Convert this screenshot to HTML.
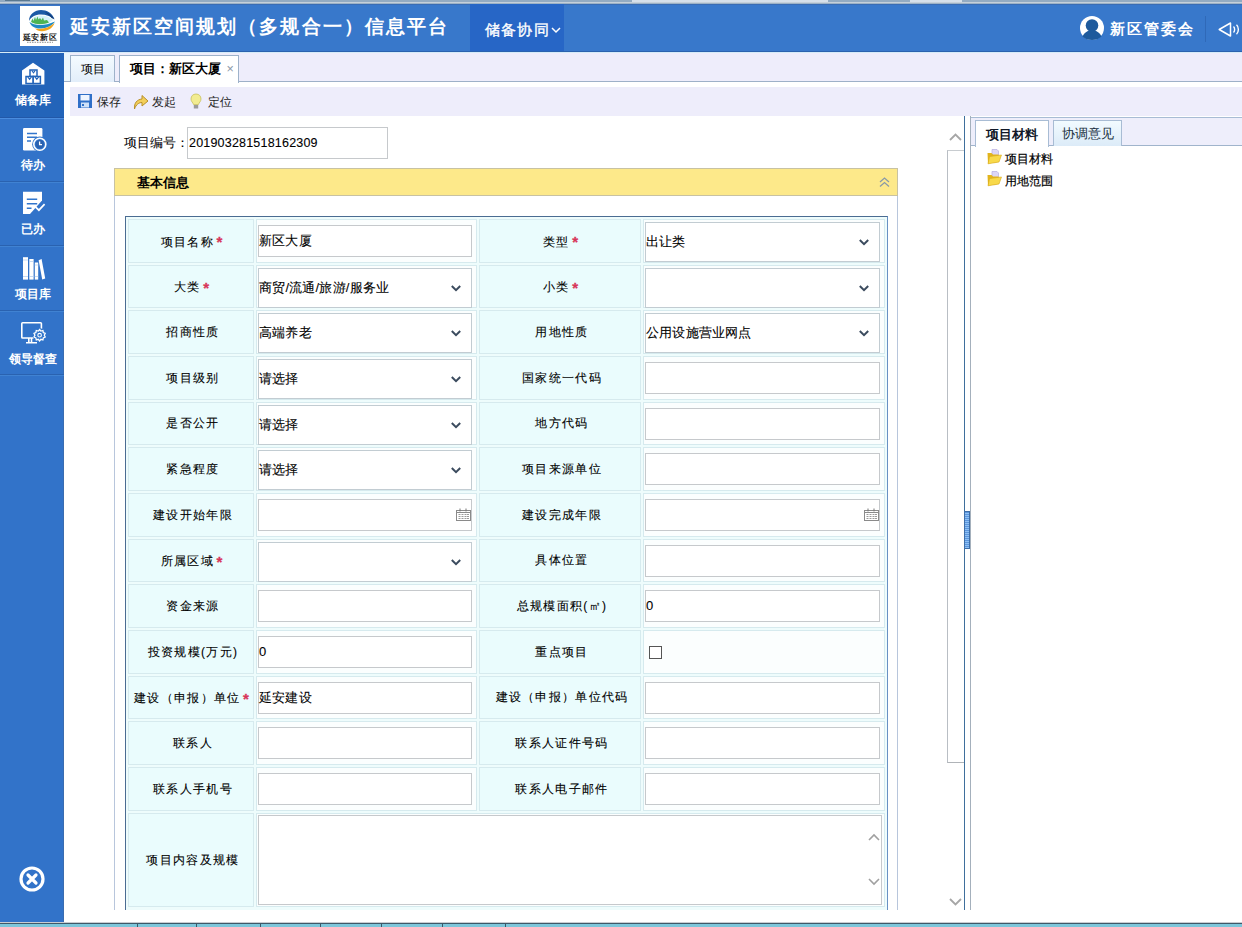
<!DOCTYPE html>
<html><head><meta charset="utf-8">
<style>
*{box-sizing:border-box}
html,body{margin:0;padding:0;width:1242px;height:927px;overflow:hidden;background:#fff;font-family:"Liberation Sans",sans-serif;font-size:12px;color:#000}
.a{position:absolute}
#top{left:0;top:0;width:1242px;height:4px;background:#9cb2c6}
#hdr{left:0;top:4px;width:1242px;height:48px;background:#3878cb;border-bottom:1px solid #2b62ae}
#logo{left:20px;top:6px;width:40px;height:40px;background:#fff}
#title{left:70px;top:15px;color:#fff;font-size:19px;letter-spacing:2.05px;font-weight:bold;line-height:24px;white-space:nowrap}
#nav{left:470px;top:4px;width:94px;height:47px;background:#2766c6}
#navt{left:485px;top:19.5px;color:#fff;font-size:15px;letter-spacing:1.2px;line-height:20px;-webkit-text-stroke:0.35px #fff;white-space:nowrap}
#user{left:1110px;top:19px;color:#fff;font-size:15px;letter-spacing:2.1px;font-weight:bold;line-height:20px;white-space:nowrap}
#sep{left:1205px;top:16px;width:1px;height:26px;background:#2f69b8}
#side{left:0;top:53px;width:64px;height:869px;background:#3273c9}
.st{position:absolute;left:0;width:64px;text-align:center;color:#fff;font-size:12px;line-height:15px;font-weight:bold;white-space:nowrap}
.si{position:absolute;left:0;width:64px;height:64px;border-bottom:1px solid #2a66b6;box-shadow:0 1px 0 #4a88d4}
.si .t{position:absolute;left:0;width:64px;text-align:center;color:#fff;font-size:12px;line-height:14px;top:40px;white-space:nowrap}
.si svg{position:absolute}
#content{left:64px;top:52px;width:1178px;height:870px;background:#fff}
#tabbar{left:64px;top:52px;width:1178px;height:30px;background:#eeedfb;border-top:1px solid #dcf0fb;border-bottom:1px solid #9eb0c8}
.tab{position:absolute;top:55px;height:27px;border:1px solid #9eb2ca;border-bottom:none;font-size:12px;line-height:27px;text-align:center;white-space:nowrap}
#toolbar{left:70px;top:87px;width:1172px;height:29px;background:#eeedfb}
.tb{position:absolute;top:95px;font-size:12px;line-height:14px;color:#222;white-space:nowrap}
.lc,.vc{position:absolute;border:1px solid #d6eaee}
.lc{background:#eafcfd;display:flex;align-items:center;justify-content:center;padding-left:4px;font-size:12px;letter-spacing:1.3px;color:#000;-webkit-text-stroke:0.1px #000;white-space:nowrap}
.vc{background:#fbfefe}
.req{color:#d8365a;-webkit-text-stroke:0.3px #d8365a;margin-left:2.5px;margin-right:3px;letter-spacing:0;font-size:15px;font-weight:bold;position:relative;top:1.5px}
.inp,.sel,.ta{position:absolute;background:#fff;border:1px solid #c6c9cc;font-size:13px;letter-spacing:0.2px;color:#000;-webkit-text-stroke:0.1px #000;white-space:nowrap}
.sel{border-color:#c2ccd2}
.inp .v,.sel .v{position:absolute;left:0;top:50%;transform:translateY(-50%);line-height:16px}
.chev{position:absolute;right:10px;top:50%;margin-top:-3px}
.cal{position:absolute;right:0;top:8px}
.chk{position:absolute;width:13px;height:13px;border:1px solid #555;background:#fff}
</style></head><body>
<div class="a" id="top"></div>
<div class="a" style="left:0;top:0;width:1242px;height:2px;background:#93abc2"></div>
<div class="a" style="left:5px;top:0;width:25px;height:1px;background:#5a7890"></div><div class="a" style="left:632px;top:0;width:196px;height:2px;background:#d6e0ea"></div>
<div class="a" style="left:910px;top:0;width:52px;height:2px;background:#d6e0ea"></div>
<div class="a" style="left:0;top:2px;width:1242px;height:1px;background:#c6d0da"></div>
<div class="a" id="hdr"></div>
<div class="a" style="left:0;top:4px;width:1242px;height:1px;background:#3a6cb4"></div>
<div class="a" id="nav"></div>
<div class="a" id="logo"></div>
<svg class="a" style="left:20px;top:6px" width="40" height="40" viewBox="0 0 40 40">
 <path d="M9 15 C9 8 15 4 21 4 C27 4 32 7 34.5 13 C30 10 26 8.5 21 8.5 C15 8.5 11 11 9 15 Z" fill="#1c5aa6"/>
 <path d="M25 6 C29 7 32.5 9.5 34.5 13.5 L31.5 12 C29.5 9.5 27 8 25 6 Z" fill="#123e7c"/>
 <path d="M10.5 15.5 C12 11.5 16 9.5 21 9.5 C26 9.5 30 11 33 14 L29 17 C24 18 16 18.5 10.5 15.5 Z" fill="#d6f2fa"/>
 <path d="M11 16 L12.5 12.5 L13.5 15 L15 11 L16 14 L17.5 10.5 L18.5 13.5 L20 12 L21.5 14 L23 11.5 L24 14.5 L27 14 L29 16.5 C24 18.5 16 19 11 16 Z" fill="#4cb454"/>
 <path d="M9.5 16 C14 19.5 24 20.5 35 15.5 C33 19 28 22 21 22.5 C15 22.8 11 20.5 9.5 16 Z" fill="#1f8ac4"/>
 <path d="M15 22.5 C21 24 29 22 34.5 17 C33 22 28 25 22 25.2 C19 25.3 16.5 24.2 15 22.5 Z" fill="#f2a41e"/>
 <text x="20" y="33.6" text-anchor="middle" font-size="7.6" font-weight="bold" fill="#1a1a1a" letter-spacing="0.6">延安新区</text>
 <path d="M7 36.3 H33" stroke="#666" stroke-width="0.7" stroke-dasharray="1.6 0.9"/>
</svg>
<div class="a" id="title">延安新区空间规划（多规合一）信息平台</div>
<div class="a" id="navt">储备协同<svg width="10" height="8" viewBox="0 0 10 8" style="margin-left:1px;vertical-align:1px"><path d="M1 2 L5 6 L9 2" fill="none" stroke="#fff" stroke-width="1.5"/></svg></div>
<div class="a" id="user">新区管委会</div>
<svg class="a" style="left:1079px;top:15px" width="26" height="26" viewBox="0 0 26 26">
 <circle cx="13" cy="13" r="12" fill="#fff"/>
 <circle cx="13" cy="10.5" r="6.3" fill="#1e5a9c"/>
 <path d="M3.5 21.5 C6 16.5 9 15.5 13 15.5 C17 15.5 20 16.5 22.5 21.5 C20 24 17 25 13 25 C9 25 6 24 3.5 21.5 Z" fill="#1e5a9c"/>
</svg>
<svg class="a" style="left:1218px;top:22px" width="24" height="15" viewBox="0 0 24 15">
 <path d="M1.2 7.5 L12.5 1 V14 Z" fill="none" stroke="#fff" stroke-width="1.5" stroke-linejoin="round"/>
 <path d="M15.5 4.5 C17 6 17 9 15.5 10.5" fill="none" stroke="#fff" stroke-width="1.4"/>
 <path d="M18.5 2.8 C21 5 21 10 18.5 12.2" fill="none" stroke="#fff" stroke-width="1.4"/>
</svg>
<div class="a" id="sep"></div>

<div class="a" id="side"></div>
<div class="a" style="left:63px;top:53px;width:1px;height:869px;background:#3a6cb0"></div>
<div class="a" style="left:0;top:53px;width:64px;height:64px;background:#2364b9"></div>
<div class="a" style="left:0;top:117px;width:64px;height:1px;background:#2258a8"></div>
<div class="a" style="left:0;top:118px;width:64px;height:1px;background:#4a8cde"></div>
<div class="a" style="left:0;top:181px;width:64px;height:1px;background:#2a62b0"></div>
<div class="a" style="left:0;top:182px;width:64px;height:1px;background:#4082d2"></div>
<div class="a" style="left:0;top:245px;width:64px;height:1px;background:#2a62b0"></div>
<div class="a" style="left:0;top:246px;width:64px;height:1px;background:#4082d2"></div>
<div class="a" style="left:0;top:310px;width:64px;height:1px;background:#2a62b0"></div>
<div class="a" style="left:0;top:311px;width:64px;height:1px;background:#4082d2"></div>
<div class="a" style="left:0;top:374px;width:64px;height:1px;background:#2a62b0"></div>
<div class="a" style="left:0;top:375px;width:64px;height:1px;background:#4082d2"></div>
<div class="st" style="top:93px;left:1px">储备库</div>
<div class="st" style="top:158px;left:1px">待办</div>
<div class="st" style="top:222px;left:1px">已办</div>
<div class="st" style="top:287px;left:1px">项目库</div>
<div class="st" style="top:351.5px;left:1px">领导督查</div>
<svg class="a" style="left:0;top:0" width="64" height="927" viewBox="0 0 64 927">
 <path d="M22 70.5 L33 62.8 L44.4 70.5 V84.5 H22 Z" fill="#fff"/>
 <rect x="30" y="70" width="7" height="6.5" fill="#fff" stroke="#2364b9" stroke-width="1.5"/>
 <rect x="26" y="76.5" width="7.2" height="7" fill="#fff" stroke="#2364b9" stroke-width="1.5"/>
 <rect x="33.2" y="76.5" width="7.2" height="7" fill="#fff" stroke="#2364b9" stroke-width="1.5"/>
 <path d="M31.8 70.5 L33.5 72.8 L35.2 70.5 M27.8 77 L29.6 79.3 L31.4 77 M35 77 L36.8 79.3 L38.6 77" fill="none" stroke="#2364b9" stroke-width="1.2"/>
 <rect x="23" y="128" width="19.4" height="22.4" rx="1.2" fill="#fff"/>
 <path d="M27 133.5 H37 M27 137.3 H37 M27 141 H31" stroke="#3276cc" stroke-width="1.6"/>
 <circle cx="39.8" cy="144.2" r="7.6" fill="#3276cc"/>
 <circle cx="39.8" cy="144.2" r="6" fill="none" stroke="#fff" stroke-width="1.6"/>
 <circle cx="39.8" cy="144.2" r="4.2" fill="#2a62b0"/>
 <path d="M39.6 141.5 V144.6 H42" fill="none" stroke="#fff" stroke-width="1.3"/>
 <path d="M23 191.7 H42 V200.5 L30 214 H23 Z" fill="#fff"/>
 <path d="M26.8 199.2 H37.2 M26.8 203.7 H37.2 M26.8 208.2 H31.5" stroke="#3276cc" stroke-width="1.5"/>
 <path d="M35.4 206.8 L38.9 210.2 L44.6 204.2" fill="none" stroke="#fff" stroke-width="1.7"/>
 <rect x="23" y="257.2" width="5" height="22.4" fill="#fff"/>
 <rect x="29.3" y="259" width="4.3" height="20.6" fill="#fff"/>
 <rect x="34.8" y="262.5" width="3.4" height="17.1" fill="#fff"/>
 <path d="M38.6 260.2 L41.6 259 L45.2 278.6 L42.2 279.6 Z" fill="#fff"/>
 <path d="M23 260 H28 M23 276.5 H28 M29.3 261.5 H33.6 M29.3 276.5 H33.6 M34.8 265 H38.2 M34.8 276.5 H38.2" stroke="#b8d0f0" stroke-width="0.8"/>
 <rect x="21.8" y="322.8" width="19.6" height="15.2" rx="0.8" fill="none" stroke="#fff" stroke-width="1.6"/>
 <path d="M31.5 338 V342 M28.8 338 V342 M26 342.8 H37" stroke="#fff" stroke-width="1.6"/>
 <circle cx="39.6" cy="335.2" r="7" fill="#3276cc"/>
 <path d="M39.6 329.5 l1.3 1.6 2 -0.6 0.4 2 1.9 0.9 -0.9 1.8 0.9 1.8 -1.9 0.9 -0.4 2 -2 -0.6 -1.3 1.6 -1.3 -1.6 -2 0.6 -0.4 -2 -1.9 -0.9 0.9 -1.8 -0.9 -1.8 1.9 -0.9 0.4 -2 2 0.6 Z" fill="none" stroke="#fff" stroke-width="1.3"/>
 <circle cx="39.6" cy="335.2" r="1.8" fill="none" stroke="#fff" stroke-width="1.1"/>
 <circle cx="32" cy="879" r="11" fill="none" stroke="#fff" stroke-width="3.2"/>
 <path d="M28 875 L36 883 M36 875 L28 883" stroke="#fff" stroke-width="3.2" stroke-linecap="round"/>
</svg>

<div class="a" id="tabbar"></div>
<div class="a" style="left:0;top:52px;width:1242px;height:1px;background:#d6ecf8"></div>
<div class="a" style="left:64px;top:53px;width:6px;height:28px;background:#eaf6fc"></div>
<div class="tab" style="left:70px;width:45px;background:linear-gradient(#f4fbff,#e2eefa)">项目</div>
<div class="tab" style="left:119px;width:120px;height:28px;background:#fff;font-weight:bold;text-align:left;padding-left:10px;font-size:12.6px">项目：新区大厦 <span style="font-weight:normal;color:#8a98a8;margin-left:2px">×</span></div>
<div class="a" id="toolbar"></div>
<div class="tb" style="left:97px">保存</div>
<svg class="a" style="left:77px;top:93px" width="16" height="16" viewBox="0 0 16 16">
 <rect x="1" y="1" width="14" height="14" fill="#2f6fc8"/>
 <rect x="3.5" y="2" width="9" height="5.5" fill="#eef4ff"/>
 <rect x="4" y="9.5" width="8" height="5" fill="#cfe0f8"/>
 <rect x="5" y="11" width="2" height="2" fill="#2f6fc8"/>
</svg>
<svg class="a" style="left:133px;top:93px" width="16" height="17" viewBox="0 0 16 17">
 <path d="M1.5 16 C1 10 4 6.5 9 6 V2.5 L15 8 L9 13 V9.5 C6 9.5 3 11.5 1.5 16 Z" fill="#f3cf5a" stroke="#b8902a" stroke-width="1"/>
</svg>
<svg class="a" style="left:190px;top:93px" width="12" height="17" viewBox="0 0 12 17">
 <path d="M6 1 C9 1 11 3 11 6 C11 8.5 9 9.5 8.5 11.5 H3.5 C3 9.5 1 8.5 1 6 C1 3 3 1 6 1 Z" fill="#f2ec90" stroke="#c8c060" stroke-width="0.8"/>
 <rect x="3.8" y="12" width="4.4" height="3.5" fill="#9a9a9a"/>
</svg>
<div class="tb" style="left:152px">发起</div>
<div class="tb" style="left:208px">定位</div>

<!-- main -->
<div class="a" style="left:124px;top:135px;font-size:13px;line-height:16px;white-space:nowrap">项目编号：</div>
<div class="inp" style="left:187px;top:127px;width:201px;height:32px"><span class="v" style="left:1px;font-size:12.5px">201903281518162309</span></div>

<div class="a" style="left:114px;top:168px;width:784px;height:760px;border:1px solid #b8c6dc;border-top:none;background:#fff"></div>
<div class="a" style="left:114px;top:168px;width:784px;height:28px;background:#fde98a;border:1px solid #c8c2a2"></div>
<div class="a" style="left:137px;top:175px;font-size:13px;font-weight:bold;line-height:16px">基本信息</div>

<div class="a" style="left:125px;top:216px;width:763px;height:720px;border:1px solid #4b6c92;border-right-color:#6890c4;background:#eefcfc"></div>
<div class="lc" style="left:128px;top:219px;width:126px;height:44px"><span>项目名称<span class="req">*</span></span></div>
<div class="vc" style="left:256px;top:219px;width:221px;height:44px"></div>
<div class="inp" style="left:258px;top:225px;width:214px;height:32px"><span class="v">新区大厦</span></div>
<div class="lc" style="left:479px;top:219px;width:162px;height:44px"><span>类型<span class="req">*</span></span></div>
<div class="vc" style="left:643px;top:219px;width:242px;height:44px"></div>
<div class="sel" style="left:645px;top:222px;width:235px;height:40px"><span class="v">出让类</span><svg class="chev" width="10" height="7" viewBox="0 0 10 7"><path d="M0.8 1 L5 5.2 L9.2 1" fill="none" stroke="#3b4b5e" stroke-width="2"/></svg></div>
<div class="lc" style="left:128px;top:265px;width:126px;height:43px"><span>大类<span class="req">*</span></span></div>
<div class="vc" style="left:256px;top:265px;width:221px;height:43px"></div>
<div class="sel" style="left:258px;top:268px;width:214px;height:40px"><span class="v">商贸/流通/旅游/服务业</span><svg class="chev" width="10" height="7" viewBox="0 0 10 7"><path d="M0.8 1 L5 5.2 L9.2 1" fill="none" stroke="#3b4b5e" stroke-width="2"/></svg></div>
<div class="lc" style="left:479px;top:265px;width:162px;height:43px"><span>小类<span class="req">*</span></span></div>
<div class="vc" style="left:643px;top:265px;width:242px;height:43px"></div>
<div class="sel" style="left:645px;top:268px;width:235px;height:40px"><span class="v"></span><svg class="chev" width="10" height="7" viewBox="0 0 10 7"><path d="M0.8 1 L5 5.2 L9.2 1" fill="none" stroke="#3b4b5e" stroke-width="2"/></svg></div>
<div class="lc" style="left:128px;top:310px;width:126px;height:44px"><span>招商性质</span></div>
<div class="vc" style="left:256px;top:310px;width:221px;height:44px"></div>
<div class="sel" style="left:258px;top:313px;width:214px;height:40px"><span class="v">高端养老</span><svg class="chev" width="10" height="7" viewBox="0 0 10 7"><path d="M0.8 1 L5 5.2 L9.2 1" fill="none" stroke="#3b4b5e" stroke-width="2"/></svg></div>
<div class="lc" style="left:479px;top:310px;width:162px;height:44px"><span>用地性质</span></div>
<div class="vc" style="left:643px;top:310px;width:242px;height:44px"></div>
<div class="sel" style="left:645px;top:313px;width:235px;height:40px"><span class="v">公用设施营业网点</span><svg class="chev" width="10" height="7" viewBox="0 0 10 7"><path d="M0.8 1 L5 5.2 L9.2 1" fill="none" stroke="#3b4b5e" stroke-width="2"/></svg></div>
<div class="lc" style="left:128px;top:356px;width:126px;height:44px"><span>项目级别</span></div>
<div class="vc" style="left:256px;top:356px;width:221px;height:44px"></div>
<div class="sel" style="left:258px;top:359px;width:214px;height:40px"><span class="v">请选择</span><svg class="chev" width="10" height="7" viewBox="0 0 10 7"><path d="M0.8 1 L5 5.2 L9.2 1" fill="none" stroke="#3b4b5e" stroke-width="2"/></svg></div>
<div class="lc" style="left:479px;top:356px;width:162px;height:44px"><span>国家统一代码</span></div>
<div class="vc" style="left:643px;top:356px;width:242px;height:44px"></div>
<div class="inp" style="left:645px;top:362px;width:235px;height:32px"><span class="v"></span></div>
<div class="lc" style="left:128px;top:402px;width:126px;height:43px"><span>是否公开</span></div>
<div class="vc" style="left:256px;top:402px;width:221px;height:43px"></div>
<div class="sel" style="left:258px;top:405px;width:214px;height:40px"><span class="v">请选择</span><svg class="chev" width="10" height="7" viewBox="0 0 10 7"><path d="M0.8 1 L5 5.2 L9.2 1" fill="none" stroke="#3b4b5e" stroke-width="2"/></svg></div>
<div class="lc" style="left:479px;top:402px;width:162px;height:43px"><span>地方代码</span></div>
<div class="vc" style="left:643px;top:402px;width:242px;height:43px"></div>
<div class="inp" style="left:645px;top:408px;width:235px;height:32px"><span class="v"></span></div>
<div class="lc" style="left:128px;top:447px;width:126px;height:44px"><span>紧急程度</span></div>
<div class="vc" style="left:256px;top:447px;width:221px;height:44px"></div>
<div class="sel" style="left:258px;top:450px;width:214px;height:40px"><span class="v">请选择</span><svg class="chev" width="10" height="7" viewBox="0 0 10 7"><path d="M0.8 1 L5 5.2 L9.2 1" fill="none" stroke="#3b4b5e" stroke-width="2"/></svg></div>
<div class="lc" style="left:479px;top:447px;width:162px;height:44px"><span>项目来源单位</span></div>
<div class="vc" style="left:643px;top:447px;width:242px;height:44px"></div>
<div class="inp" style="left:645px;top:453px;width:235px;height:32px"><span class="v"></span></div>
<div class="lc" style="left:128px;top:493px;width:126px;height:44px"><span>建设开始年限</span></div>
<div class="vc" style="left:256px;top:493px;width:221px;height:44px"></div>
<div class="inp" style="left:258px;top:499px;width:214px;height:32px"><svg class="cal" width="15" height="13" viewBox="0 0 15 13"><rect x="0.5" y="2.5" width="14" height="10" fill="#fff" stroke="#8a8a8a"/><line x1="0.5" y1="4.5" x2="14.5" y2="4.5" stroke="#8a8a8a"/><path d="M4 0.5v3M10 0.5v3" stroke="#777"/><path d="M2.5 6.5h2M5.5 6.5h2M8.5 6.5h2M11 6.5h2M2.5 8.5h2M5.5 8.5h2M8.5 8.5h2M11 8.5h2M2.5 10.5h2M5.5 10.5h2M8.5 10.5h2M11 10.5h2" stroke="#9a9a9a"/></svg></div>
<div class="lc" style="left:479px;top:493px;width:162px;height:44px"><span>建设完成年限</span></div>
<div class="vc" style="left:643px;top:493px;width:242px;height:44px"></div>
<div class="inp" style="left:645px;top:499px;width:235px;height:32px"><svg class="cal" width="15" height="13" viewBox="0 0 15 13"><rect x="0.5" y="2.5" width="14" height="10" fill="#fff" stroke="#8a8a8a"/><line x1="0.5" y1="4.5" x2="14.5" y2="4.5" stroke="#8a8a8a"/><path d="M4 0.5v3M10 0.5v3" stroke="#777"/><path d="M2.5 6.5h2M5.5 6.5h2M8.5 6.5h2M11 6.5h2M2.5 8.5h2M5.5 8.5h2M8.5 8.5h2M11 8.5h2M2.5 10.5h2M5.5 10.5h2M8.5 10.5h2M11 10.5h2" stroke="#9a9a9a"/></svg></div>
<div class="lc" style="left:128px;top:539px;width:126px;height:43px"><span>所属区域<span class="req">*</span></span></div>
<div class="vc" style="left:256px;top:539px;width:221px;height:43px"></div>
<div class="sel" style="left:258px;top:542px;width:214px;height:40px"><span class="v"></span><svg class="chev" width="10" height="7" viewBox="0 0 10 7"><path d="M0.8 1 L5 5.2 L9.2 1" fill="none" stroke="#3b4b5e" stroke-width="2"/></svg></div>
<div class="lc" style="left:479px;top:539px;width:162px;height:43px"><span>具体位置</span></div>
<div class="vc" style="left:643px;top:539px;width:242px;height:43px"></div>
<div class="inp" style="left:645px;top:545px;width:235px;height:32px"><span class="v"></span></div>
<div class="lc" style="left:128px;top:584px;width:126px;height:44px"><span>资金来源</span></div>
<div class="vc" style="left:256px;top:584px;width:221px;height:44px"></div>
<div class="inp" style="left:258px;top:590px;width:214px;height:32px"><span class="v"></span></div>
<div class="lc" style="left:479px;top:584px;width:162px;height:44px"><span>总规模面积(㎡)</span></div>
<div class="vc" style="left:643px;top:584px;width:242px;height:44px"></div>
<div class="inp" style="left:645px;top:590px;width:235px;height:32px"><span class="v">0</span></div>
<div class="lc" style="left:128px;top:630px;width:126px;height:44px"><span>投资规模(万元)</span></div>
<div class="vc" style="left:256px;top:630px;width:221px;height:44px"></div>
<div class="inp" style="left:258px;top:636px;width:214px;height:32px"><span class="v">0</span></div>
<div class="lc" style="left:479px;top:630px;width:162px;height:44px"><span>重点项目</span></div>
<div class="vc" style="left:643px;top:630px;width:242px;height:44px"></div>
<div class="chk" style="left:649px;top:646px"></div>
<div class="lc" style="left:128px;top:676px;width:126px;height:43px"><span>建设（申报）单位<span class="req">*</span></span></div>
<div class="vc" style="left:256px;top:676px;width:221px;height:43px"></div>
<div class="inp" style="left:258px;top:682px;width:214px;height:32px"><span class="v">延安建设</span></div>
<div class="lc" style="left:479px;top:676px;width:162px;height:43px"><span>建设（申报）单位代码</span></div>
<div class="vc" style="left:643px;top:676px;width:242px;height:43px"></div>
<div class="inp" style="left:645px;top:682px;width:235px;height:32px"><span class="v"></span></div>
<div class="lc" style="left:128px;top:721px;width:126px;height:44px"><span>联系人</span></div>
<div class="vc" style="left:256px;top:721px;width:221px;height:44px"></div>
<div class="inp" style="left:258px;top:727px;width:214px;height:32px"><span class="v"></span></div>
<div class="lc" style="left:479px;top:721px;width:162px;height:44px"><span>联系人证件号码</span></div>
<div class="vc" style="left:643px;top:721px;width:242px;height:44px"></div>
<div class="inp" style="left:645px;top:727px;width:235px;height:32px"><span class="v"></span></div>
<div class="lc" style="left:128px;top:767px;width:126px;height:44px"><span>联系人手机号</span></div>
<div class="vc" style="left:256px;top:767px;width:221px;height:44px"></div>
<div class="inp" style="left:258px;top:773px;width:214px;height:32px"><span class="v"></span></div>
<div class="lc" style="left:479px;top:767px;width:162px;height:44px"><span>联系人电子邮件</span></div>
<div class="vc" style="left:643px;top:767px;width:242px;height:44px"></div>
<div class="inp" style="left:645px;top:773px;width:235px;height:32px"><span class="v"></span></div>
<div class="lc" style="left:128px;top:813px;width:126px;height:94px"><span>项目内容及规模</span></div>
<div class="vc" style="left:256px;top:813px;width:629px;height:94px"></div>
<div class="ta" style="left:258px;top:815px;width:624px;height:90px"><svg style="position:absolute;left:609px;top:17px" width="12" height="8" viewBox="0 0 12 8"><path d="M1 7 L6 2 L11 7" fill="none" stroke="#a0a0a0" stroke-width="1.6"/></svg><svg style="position:absolute;left:609px;top:62px" width="12" height="8" viewBox="0 0 12 8"><path d="M1 1 L6 6 L11 1" fill="none" stroke="#a0a0a0" stroke-width="1.6"/></svg></div>

<!-- scrollbar + splitter + right panel -->
<svg class="a" style="left:948px;top:132px" width="15" height="10" viewBox="0 0 15 10"><path d="M2 8 L7.5 2.5 L13 8" fill="none" stroke="#a6a6a6" stroke-width="1.8"/></svg>
<div class="a" style="left:947px;top:150px;width:17px;height:613px;border-left:1px solid #b9bec4;border-top:1px solid #c8ccd0;border-bottom:1px solid #b0b4b8;background:#fff"></div>
<svg class="a" style="left:948px;top:897px" width="15" height="10" viewBox="0 0 15 10"><path d="M2 2 L7.5 7.5 L13 2" fill="none" stroke="#a6a6a6" stroke-width="1.8"/></svg>
<div class="a" style="left:964px;top:116px;width:1px;height:794px;background:#3f6f9c"></div>
<div class="a" style="left:970px;top:116px;width:1px;height:794px;background:#a4b0bc"></div>
<div class="a" style="left:964px;top:511px;width:6px;height:38px;background:repeating-linear-gradient(#5b95dc 0 1px,#8ec0f4 1px 2px);border:1px solid #3e6ea8"></div>
<div class="a" style="left:971px;top:117px;width:271px;height:29px;background:#eeeefb;border-top:1px solid #a8bcd4;border-bottom:1px solid #a0b4cc"></div>
<div class="a" style="left:975px;top:120px;width:74px;height:27px;background:#fff;border:1px solid #a8bcd4;border-bottom:none;font-size:12.5px;font-weight:bold;line-height:28px;text-align:center;color:#101828">项目材料</div>
<div class="a" style="left:1053px;top:120px;width:69px;height:26px;background:linear-gradient(#f2fbff,#dcebf8);border:1px solid #a8bcd4;border-bottom:none;font-size:12.5px;line-height:27px;text-align:center;color:#203040">协调意见</div>
<svg class="a" style="left:986px;top:148px" width="17" height="40" viewBox="0 0 17 40">
 <path d="M6 1.5 H11 L12.5 3 V9 H6 Z" fill="#dcd6f6" stroke="#b4aee0" stroke-width="0.7"/>
 <path d="M1.5 5 H5.5 L7 6.5 H12.5 V14 L2 15.5 Z" fill="#e2b41c"/>
 <path d="M3.5 8.5 L15.5 7 L13 14 L2 15.8 Z" fill="#f8d94a" stroke="#d6a818" stroke-width="0.6"/>
 <path d="M6 23.5 H11 L12.5 25 V31 H6 Z" fill="#dcd6f6" stroke="#b4aee0" stroke-width="0.7"/>
 <path d="M1.5 27 H5.5 L7 28.5 H12.5 V36 L2 37.5 Z" fill="#e2b41c"/>
 <path d="M3.5 30.5 L15.5 29 L13 36 L2 37.8 Z" fill="#f8d94a" stroke="#d6a818" stroke-width="0.6"/>
</svg>
<div class="a" style="left:1004.5px;top:152px;font-size:12px;line-height:14px;color:#000;-webkit-text-stroke:0.2px #000">项目材料</div>
<div class="a" style="left:1004.5px;top:174px;font-size:12px;line-height:14px;color:#000;-webkit-text-stroke:0.2px #000">用地范围</div>
<svg class="a" style="left:878px;top:176px" width="13" height="12" viewBox="0 0 13 12"><path d="M2 6 L6.5 2 L11 6 M2 10.5 L6.5 6.5 L11 10.5" fill="none" stroke="#8a9aa6" stroke-width="1.3"/></svg>
<!-- bottom clip -->
<div class="a" style="left:64px;top:910px;width:884px;height:12px;background:#fff"></div>
<div class="a" style="left:0;top:922px;width:1242px;height:1px;background:#c8cdd2"></div><div class="a" style="left:0;top:923px;width:1242px;height:1px;background:#3e5868"></div>
<div class="a" style="left:0;top:924px;width:1242px;height:3px;background:#7cc6da"></div><div class="a" style="left:137px;top:923px;width:1px;height:4px;background:#3a5868"></div><div class="a" style="left:196px;top:923px;width:1px;height:4px;background:#3a5868"></div><div class="a" style="left:260px;top:923px;width:1px;height:4px;background:#3a5868"></div><div class="a" style="left:320px;top:923px;width:1px;height:4px;background:#3a5868"></div><div class="a" style="left:381px;top:923px;width:1px;height:4px;background:#3a5868"></div><div class="a" style="left:442px;top:923px;width:1px;height:4px;background:#3a5868"></div><div class="a" style="left:505px;top:923px;width:1px;height:4px;background:#3a5868"></div><div class="a" style="left:137px;top:923px;width:59px;height:1px;background:#3a5868"></div><div class="a" style="left:442px;top:923px;width:63px;height:1px;background:#3a5868"></div>
</body></html>
